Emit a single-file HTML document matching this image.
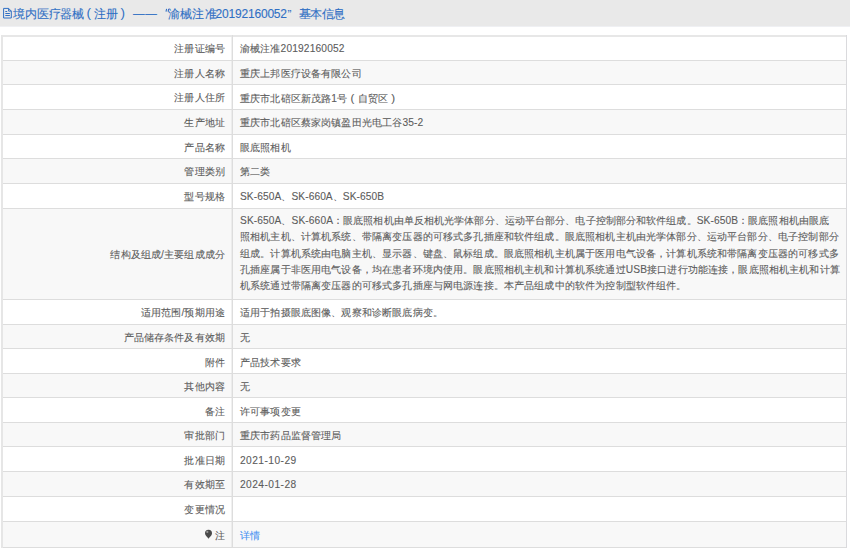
<!DOCTYPE html>
<html><head><meta charset="utf-8">
<style>
html,body{margin:0;padding:0;background:#fff;}
body{position:relative;width:850px;height:548px;overflow:hidden;font-family:"Liberation Sans",sans-serif;}
.hd{position:absolute;left:0;top:0;width:850px;height:26px;background:#e9e9e9;}
.ht{position:absolute;white-space:nowrap;-webkit-text-stroke:0.1px currentColor;color:#2f6fc4;font-size:11.6px;line-height:20px;}
.bg{position:absolute;left:1px;width:846px;}
.hl{position:absolute;left:1px;width:846px;height:1px;background:#dddddd;}
.vl{position:absolute;width:1px;background:#dddddd;}
.lb{position:absolute;right:625px;white-space:nowrap;font-size:10.2px;line-height:16px;color:#5c5c5c;letter-spacing:0.15px;-webkit-text-stroke:0.1px currentColor;}
.vv{position:absolute;left:240px;white-space:nowrap;font-size:10.2px;line-height:16px;color:#5c5c5c;letter-spacing:0.15px;-webkit-text-stroke:0.1px currentColor;}
.lk{color:#4792f2;}
.pp{display:inline-block;width:10.35px;text-align:center;font-size:11.5px;position:relative;top:0px;}
</style></head><body>

<div class="hd"></div><div style="position:absolute;left:0;top:26px;width:850px;height:1px;background:#eff0f3"></div>
<svg style="position:absolute;left:2px;top:7px" width="11" height="12" viewBox="0 0 11 12"><path d="M1.6 1.4H6.6L9.3 4.1V11H1.6Z M6.6 1.4V4.1H9.3 M3.3 4.5H5.2 M3.3 6.5H7.9 M3.3 8.5H7.9" fill="none" stroke="#2f6fc4" stroke-width="1"/></svg>
<span class="ht" style="left:13.3px;top:4px;letter-spacing:-0.2px">境内医疗器械</span>
<span class="ht" style="left:86.6px;top:4px;font-size:13.5px;top:3px;-webkit-text-stroke:0">(</span>
<span class="ht" style="left:94.2px;top:4px;">注册</span>
<span class="ht" style="left:120.4px;top:4px;font-size:13.5px;top:3px;-webkit-text-stroke:0">)</span>
<span class="ht" style="left:133px;top:4px;top:3px;letter-spacing:0.6px">——</span>
<span class="ht" style="left:163.5px;top:4px;"><svg width='7' height='8' style='position:absolute;left:0;top:0' viewBox='0 0 7 8'><path d='M2.6 4.8L2 7.6M4.7 4.8L4.1 7.6' stroke='#2f6fc4' stroke-width='1.1' fill='none'/></svg></span>
<span class="ht" style="left:167.8px;top:4px;letter-spacing:0.25px">渝械注准</span>
<span class="ht" style="left:215.6px;top:4px;font-size:12px;letter-spacing:-0.2px">20192160052</span>
<span class="ht" style="left:287.5px;top:4px;">”</span>
<span class="ht" style="left:298.6px;top:4px;letter-spacing:-0.4px">基本信息</span>
<div class="bg" style="top:60.00px;height:24.60px;background:#f8f8f8"></div>
<div class="bg" style="top:109.30px;height:24.70px;background:#f8f8f8"></div>
<div class="bg" style="top:158.60px;height:24.70px;background:#f8f8f8"></div>
<div class="bg" style="top:208.00px;height:91.40px;background:#f8f8f8"></div>
<div class="bg" style="top:324.20px;height:24.60px;background:#f8f8f8"></div>
<div class="bg" style="top:373.50px;height:24.40px;background:#f8f8f8"></div>
<div class="bg" style="top:422.40px;height:24.50px;background:#f8f8f8"></div>
<div class="bg" style="top:471.40px;height:24.60px;background:#f8f8f8"></div>
<div class="bg" style="top:521.00px;height:26.00px;background:#f8f8f8"></div>
<div class="hl" style="top:35px;height:2px;background:#e7e7e7"></div>
<div class="hl" style="top:60px"></div>
<div class="hl" style="top:84px"></div>
<div class="hl" style="top:109px"></div>
<div class="hl" style="top:134px"></div>
<div class="hl" style="top:158px"></div>
<div class="hl" style="top:183px"></div>
<div class="hl" style="top:208px"></div>
<div class="hl" style="top:299px"></div>
<div class="hl" style="top:324px"></div>
<div class="hl" style="top:348px"></div>
<div class="hl" style="top:373px"></div>
<div class="hl" style="top:397px"></div>
<div class="hl" style="top:422px"></div>
<div class="hl" style="top:446px"></div>
<div class="hl" style="top:471px"></div>
<div class="hl" style="top:496px"></div>
<div class="hl" style="top:521px"></div>
<div class="hl" style="top:547px"></div>
<div class="vl" style="left:1px;top:35px;height:513px;width:2px;background:#e6e6e6"></div>
<div class="vl" style="left:232px;top:35px;height:513px;width:1px;background:#dddddd"></div>
<div class="vl" style="left:231px;top:37px;height:511px;width:1px;background:#dddddd;opacity:.45"></div>
<div class="vl" style="left:846px;top:35px;height:513px;width:1px;background:#dadadd"></div>
<span class="lb" style="top:41.00px">注册证编号</span>
<span class="vv" style="top:41.00px">渝械注准20192160052</span>
<span class="lb" style="top:65.80px">注册人名称</span>
<span class="vv" style="top:65.80px">重庆上邦医疗设备有限公司</span>
<span class="lb" style="top:90.45px">注册人住所</span>
<span class="vv" style="top:90.45px">重庆市北碚区新茂路1号<span class=pp>(</span>自贸区<span class=pp>)</span></span>
<span class="lb" style="top:115.15px">生产地址</span>
<span class="vv" style="top:115.15px">重庆市北碚区蔡家岗镇盈田光电工谷35-2</span>
<span class="lb" style="top:139.80px">产品名称</span>
<span class="vv" style="top:139.80px">眼底照相机</span>
<span class="lb" style="top:164.45px">管理类别</span>
<span class="vv" style="top:164.45px">第二类</span>
<span class="lb" style="top:189.15px">型号规格</span>
<span class="vv" style="top:189.15px"><span style='letter-spacing:0.08px'>SK-650A、SK-660A、SK-650B</span></span>
<span class="lb" style="top:247.20px">结构及组成/主要组成成分</span>
<span class="vv" style="top:212.70px"><span style='letter-spacing:0.1px'>SK-650A、SK-660A：眼底照相机由单反相机光学体部分、运动平台部分、电子控制部分和软件组成。SK-650B：眼底照相机由眼底</span></span>
<span class="vv" style="top:229.10px">照相机主机、计算机系统、带隔离变压器的可移式多孔插座和软件组成。眼底照相机主机由光学体部分、运动平台部分、电子控制部分</span>
<span class="vv" style="top:245.50px">组成。计算机系统由电脑主机、显示器、键盘、鼠标组成。眼底照相机主机属于医用电气设备，计算机系统和带隔离变压器的可移式多</span>
<span class="vv" style="top:261.90px">孔插座属于非医用电气设备，均在患者环境内使用。眼底照相机主机和计算机系统通过USB接口进行功能连接，眼底照相机主机和计算</span>
<span class="vv" style="top:278.30px">机系统通过带隔离变压器的可移式多孔插座与网电源连接。本产品组成中的软件为控制型软件组件。</span>
<span class="lb" style="top:305.30px">适用范围/预期用途</span>
<span class="vv" style="top:305.30px">适用于拍摄眼底图像、观察和诊断眼底病变。</span>
<span class="lb" style="top:330.00px">产品储存条件及有效期</span>
<span class="vv" style="top:330.00px">无</span>
<span class="lb" style="top:354.65px">附件</span>
<span class="vv" style="top:354.65px">产品技术要求</span>
<span class="lb" style="top:379.20px">其他内容</span>
<span class="vv" style="top:379.20px">无</span>
<span class="lb" style="top:403.65px">备注</span>
<span class="vv" style="top:403.65px">许可事项变更</span>
<span class="lb" style="top:428.15px">审批部门</span>
<span class="vv" style="top:428.15px">重庆市药品监督管理局</span>
<span class="lb" style="top:452.65px">批准日期</span>
<span class="vv" style="top:452.65px"><span style='letter-spacing:0.45px'>2021-10-29</span></span>
<span class="lb" style="top:477.20px">有效期至</span>
<span class="vv" style="top:477.20px"><span style='letter-spacing:0.45px'>2024-01-28</span></span>
<span class="lb" style="top:502.00px">变更情况</span>
<svg style="position:absolute;left:204.3px;top:529.40px" width="9" height="11" viewBox="0 0 9 11"><path d="M4.5 10C4.1 8.9 3 8.1 2.2 7.1C1.5 6.3 1 5.3 1 4.2A3.5 3.5 0 0 1 8 4.2C8 5.3 7.5 6.3 6.8 7.1C6 8.1 4.9 8.9 4.5 10Z" fill="#4a4a4a"/><circle cx="3.3" cy="2.9" r="1.1" fill="#9a9a9a"/></svg>
<span class="lb" style="top:527.50px">注</span>
<span class="vv lk" style="top:527.50px">详情</span>
</body></html>
